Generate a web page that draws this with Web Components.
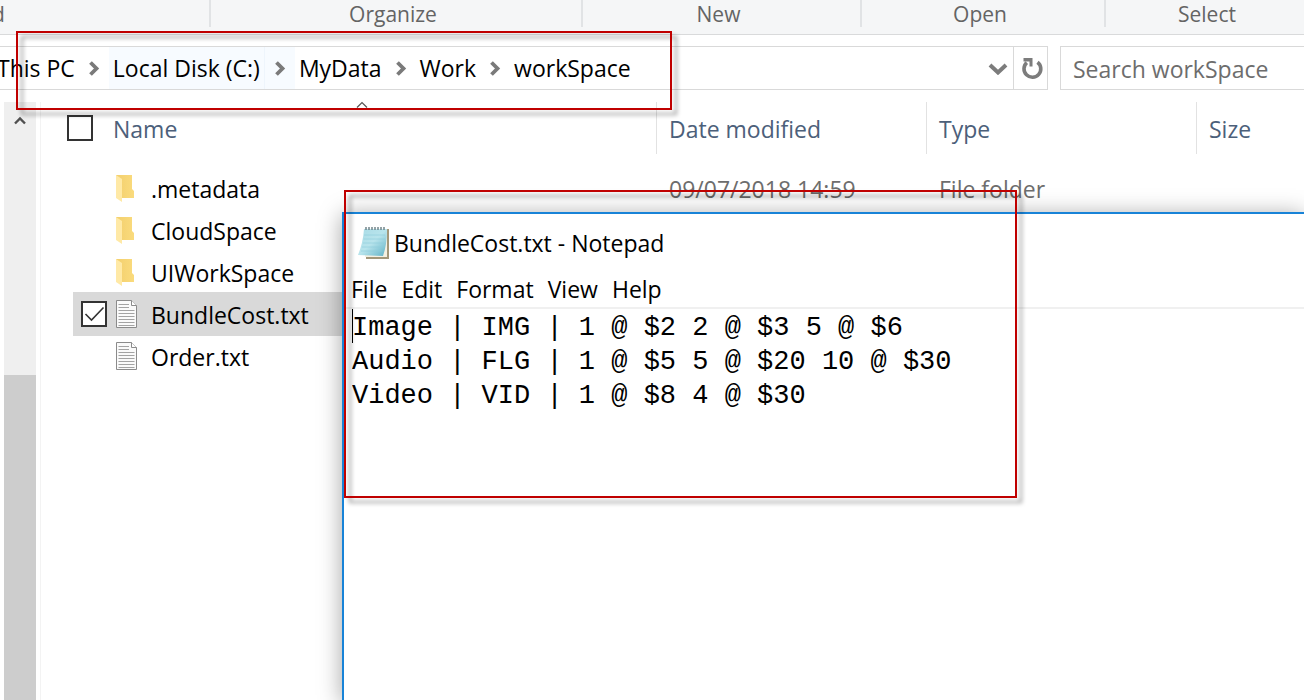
<!DOCTYPE html>
<html lang="en">
<head>
<meta charset="utf-8">
<title>workSpace</title>
<style>
  html, body { margin: 0; height: 100%; }
  body { overflow: hidden; background: #fff; }
</style>
</head>
<body>
<desktop-view></desktop-view>
<script>
const define = (name, html, setup) => {
  const template = document.createElement('template');
  template.innerHTML = html;
  customElements.define(name, class extends HTMLElement {
    constructor() {
      super();
      this.attachShadow({ mode: 'open' }).append(template.content.cloneNode(true));
    }
    connectedCallback() { if (setup) setup(this, this.shadowRoot); }
  });
};

define('ribbon-group', `
<style>
  :host { display: flex; box-sizing: border-box; height: 27px; flex: 0 0 auto; width: var(--w, 280px);
    justify-content: center; border-right: 2px solid #e1e3e5; padding-right: 6px; line-height: 28px; }
  :host([cut]) { justify-content: flex-start; text-indent: -8px; }
  :host([last]) { border: 0; flex: 1 0 auto; }
</style><slot></slot>`);

define('ribbon-bar', `
<style>
  :host { display: flex; height: 34px; background: #f5f6f7; border-bottom: 1px solid #d9dadb;
    color: #646464; font-size: 21px; overflow: hidden; }
</style>
<ribbon-group cut style="--w:211px">d</ribbon-group>
<ribbon-group style="--w:372px">Organize</ribbon-group>
<ribbon-group style="--w:279px">New</ribbon-group>
<ribbon-group style="--w:244px">Open</ribbon-group>
<ribbon-group last style="--w:208px">Select</ribbon-group>`);

define('path-crumb', `
<style>
  :host { display: flex; align-items: stretch; flex: none; }
  a { color: #000; text-decoration: none; padding: 0 4px; line-height: 43px; }
  svg { width: 12px; height: 16px; padding: 0 9px; align-self: center; }
  :host([hot]) { background: #f7fbff; }
  :host([hot]) a { border-right: 1px solid #eef5fc; }
  :host([last]) svg { display: none; }
</style>
<a href="#"><slot></slot></a>
<svg viewBox="0 0 12 16"><path d="M2.500 2.500 8.500 8.500 2.500 14.500" fill="none" stroke="#7a7a7a" stroke-width="3.800"/></svg>`);

define('address-bar', `
<style>
  :host { display: flex; flex: 1; min-width: 0; height: 42px; border: 1px solid #d9d9d9; border-left: 0; overflow: hidden; }
  nav { display: flex; flex: 1; min-width: 0; margin-left: -7px; }
  button { width: 30px; border: 0; padding: 0; background: none; display: grid; place-items: center; }
  .refresh { width: 34px; padding-left: 2px; border-left: 1px solid #d9d9d9; }
</style>
<nav aria-label="Path">
  <path-crumb>This PC</path-crumb>
  <path-crumb hot>Local Disk (C:)</path-crumb>
  <path-crumb>MyData</path-crumb>
  <path-crumb>Work</path-crumb>
  <path-crumb last>workSpace</path-crumb>
</nav>
<button aria-label="Previous locations"><svg width="20" height="14" viewBox="0 0 20 14"><path d="M2 4 10 11.500 18 4" fill="none" stroke="#7c7c7c" stroke-width="4"/></svg></button>
<button class="refresh" aria-label="Refresh"><svg width="22" height="24" viewBox="0 0 22 24"><path d="M16.500 6.200A8.400 8.400 0 1 1 5.800 6.600" fill="none" stroke="#7c7c7c" stroke-width="3.600"/><path d="M2.500 2H11.500V10.500H8.500V5.500H2.500Z" fill="#7c7c7c"/></svg></button>`);

define('search-box', `
<style>
  :host { display: block; flex: 0 0 244px; height: 42px; border: 1px solid #d9d9d9; border-right: 0; box-sizing: content-box; margin-right: -1px; }
  input { width: 100%; height: 100%; box-sizing: border-box; border: 0; padding: 2px 0 0 12px; font: inherit; background: none; outline: 0; }
  input::placeholder { color: #6d6d6d; opacity: 1; }
</style>
<input type="search" aria-label="Search workSpace" placeholder="Search workSpace">`);

define('scroll-rail', `
<style>
  :host { display: flex; flex-direction: column; flex: none; width: 33px; margin-left: 4px; background: #efefef; box-sizing: border-box; border-right: 1px solid #fff; }
  svg { margin: 14px auto 0; display: block; flex: none; }
  .thumb { margin-top: 250px; flex: 1; background: #cdcdcd; }
</style>
<svg width="12" height="9" viewBox="0 0 12 9"><path d="M1 7.500 6 2.500 11 7.500" fill="none" stroke="#505050" stroke-width="2.400"/></svg>
<div class="thumb"></div>`);

define('file-icon', `
<style>
  :host { display: block; width: 22px; height: 28px; flex: none; }
  svg { display: block; }
  .doc, .folder { display: none; }
  :host([kind=doc]) .doc, :host([kind=folder]) .folder { display: block; }
</style>
<svg class="folder" width="22" height="28" viewBox="0 0 22 28">
  <defs><linearGradient id="g" x2="1"><stop stop-color="#f3cf6d"/><stop offset="1" stop-color="#fadb7d"/></linearGradient></defs>
  <path d="M0 1H16V15L18 17V24H4Z" fill="url(#g)"/><path d="M0 1 6 5V28L0 24Z" fill="#ffe9a6"/>
</svg>
<svg class="doc" width="22" height="28" viewBox="0 0 22 28">
  <path d="M.5.500H15.500L20.500 5.500V27.500H.5Z" fill="#fafafa" stroke="#8b8b8b"/>
  <path d="M15.500.500V5.500H20.500" fill="#fff" stroke="#8b8b8b"/>
  <path d="M2.500 4.500H13M2.500 7.500H13M2.500 10.500H18.500M2.500 13.500H18.500M2.500 16.500H18.500M2.500 19.500H18.500M2.500 22.500H18.500M2.500 25.500H18.500" stroke="#a3a3a3"/>
</svg>`);

define('check-box', `
<style>
  :host { display: block; width: 26px; height: 26px; flex: none; }
  input { appearance: none; display: block; margin: 0; width: 26px; height: 26px; box-sizing: border-box;
    border: 2px solid #333; background: #fff; }
  label { display: grid; }
  input, svg { grid-area: 1 / 1; }
  svg { display: none; pointer-events: none; position: relative; }
  input:checked + svg { display: block; }
</style>
<label><input type="checkbox"><svg width="26" height="26" viewBox="0 0 26 26"><path d="M4.500 13 10.500 19 22.500 6.500" fill="none" stroke="#333" stroke-width="1.600"/></svg></label>`,
(el, root) => {
  const input = root.querySelector('input');
  input.checked = el.hasAttribute('checked');
  input.setAttribute('aria-label', el.getAttribute('name'));
});

define('file-list', `
<style>
  :host { display: block; flex: 1; min-width: 0; margin-left: 3px; border-left: 1px solid #f3f3f3; }
  table { width: 100%; table-layout: fixed; border-spacing: 0; border-collapse: separate; text-align: left; }
  th { height: 52px; padding: 2px 0 0 12px; box-sizing: border-box; border-left: 1px solid #e2e2e2; font-weight: 400; color: #4c607a; }
  th.name { padding-left: 26px; border: 0; }
  .head { display: flex; align-items: center; gap: 20px; }
  .head check-box { margin-bottom: 2px; }
  .sort { position: absolute; left: 356px; top: 101px; }
  tbody::before { content: ""; display: block; height: 13px; }
  td { height: 42px; padding: 2px 0 0 13px; box-sizing: border-box; color: #6d6d6d; }
  td.file { padding-left: 8px; color: #000; }
  .row { display: flex; align-items: center; height: 40px; }
  .row check-box { opacity: 0; margin: 0 9px 2px 0; }
  .row file-icon { margin: 0 13px 2px 0; }
  tr.on td + td { background: #d9d9d9; box-shadow: 0 1px #d9d9d9, 0 -1px #d9d9d9; }
  tr.on check-box { opacity: 1; }
</style>
<svg class="sort" width="12" height="8" viewBox="0 0 12 8"><path d="M1 6.500 6 1.500 11 6.500" fill="none" stroke="#555" stroke-width="1.200"/></svg>
<table>
  <colgroup><col style="width:32px"><col style="width:583px"><col style="width:270px"><col style="width:270px"><col></colgroup>
  <thead><tr><th class="name" colspan="2"><div class="head"><check-box name="Select all"></check-box><span>Name</span></div></th><th>Date modified</th><th>Type</th><th>Size</th></tr></thead>
  <tbody></tbody>
</table>`,
(el, root) => {
  const files = [
    ['.metadata', 'folder', '09/07/2018 14:59', 'File folder'],
    ['CloudSpace', 'folder'],
    ['UIWorkSpace', 'folder'],
    ['BundleCost.txt', 'doc'],
    ['Order.txt', 'doc'],
  ];
  root.querySelector('tbody').innerHTML = files.map(([name, kind, date = '', type = '']) => {
    const on = name === 'BundleCost.txt';
    return `<tr class="${on ? 'on' : ''}"><td></td><td class="file"><div class="row"><check-box name="${name}" ${on ? 'checked' : ''}></check-box><file-icon kind="${kind}"></file-icon><span>${name}</span></div></td><td>${date}</td><td>${type}</td><td></td></tr>`;
  }).join('');
});

define('notepad-window', `
<style>
  :host { display: flex; flex-direction: column; background: #fff; border: 2px solid #1883d7; border-right: 0; border-bottom: 0;
    box-shadow: 0 3px 22px rgba(0,0,0,.36); }
  header { display: flex; align-items: center; gap: 4px; height: 57px; padding-left: 14px; }
  nav { display: flex; gap: 14px; height: 36px; padding-left: 7px; border-bottom: 2px solid #f0f0f0; }
  button { border: 0; padding: 0; background: none; font: inherit; color: #000; }
  .page { flex: 1; display: flex; padding-left: 7px; }
  .caret { width: 1px; height: 34px; background: #000; margin: 0 -1px 0 1px; }
  textarea { flex: 1; border: 0; padding: 2px 0 0; margin: 0; outline: 0; resize: none; overflow: hidden; background: none;
    font: 27px/34px "Liberation Mono", monospace; color: #000; white-space: pre; }
</style>
<header>
  <svg width="32" height="36" viewBox="0 0 32 36">
    <defs><linearGradient id="p" x1="0" y1="0" x2="1" y2="1"><stop stop-color="#a9dbe6"/><stop offset=".5" stop-color="#b8e4ec"/><stop offset="1" stop-color="#5fb1c6"/></linearGradient></defs>
    <path d="M8 4H31V34H8Z" fill="#a3977a"/><path d="M7 4H29V32H7Z" fill="#f4f0e2"/>
    <path d="M6 4H29Q29 20 25 31L0 30Q5 18 6 4Z" fill="url(#p)"/>
    <path d="M6 10H27M5.500 14H27M5 18H26M4 22H25M3 26H24" stroke="#8ccbda" stroke-opacity=".6"/>
    <path d="M8 5V2M11 5V2M14 5V2M17 5V2M20 5V2M23 5V2M26 5V2" stroke="#72858b" stroke-width="1.500"/>
  </svg>
  <span>BundleCost.txt - Notepad</span>
</header>
<nav><button>File</button><button>Edit</button><button>Format</button><button>View</button><button>Help</button></nav>
<div class="page"><div class="caret"></div><textarea aria-label="Text" spellcheck="false">Image | IMG | 1 @ $2 2 @ $3 5 @ $6
Audio | FLG | 1 @ $5 5 @ $20 10 @ $30
Video | VID | 1 @ $8 4 @ $30</textarea></div>`);

define('marker-frame', `
<style>
  :host { display: block; box-sizing: border-box; border: 2px solid #c00000; pointer-events: none;
    filter: drop-shadow(5px 5px 2px rgba(0,0,0,.4)); }
</style>`);

define('desktop-view', `
<style>
  :host { display: flex; flex-direction: column; position: relative; min-height: 100vh; overflow: hidden;
    font: 23px/32px "Open Sans", "Noto Sans", sans-serif; color: #000; }
  .bar { display: flex; gap: 12px; padding: 11px 0 12px; }
  main { display: flex; flex: 1; }
  notepad-window { position: absolute; left: 342px; top: 212px; right: 0; bottom: 0; }
  marker-frame { position: absolute; }
  .path { left: 16px; top: 31px; width: 656px; height: 79px; }
  .text { left: 344px; top: 190px; width: 673px; height: 308px; }
</style>
<ribbon-bar></ribbon-bar>
<div class="bar"><address-bar></address-bar><search-box></search-box></div>
<main><scroll-rail></scroll-rail><file-list></file-list></main>
<notepad-window></notepad-window>
<marker-frame class="path"></marker-frame>
<marker-frame class="text"></marker-frame>`);
</script>
</body>
</html>
